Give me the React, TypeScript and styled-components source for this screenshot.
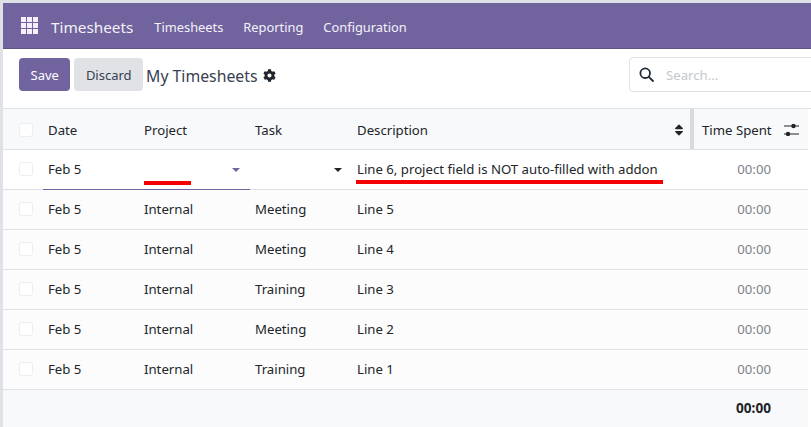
import React from "react";
import styled, { createGlobalStyle } from "styled-components";
import { FaCog, FaSort } from "react-icons/fa";

const GlobalStyle = createGlobalStyle`
  html, body {
    margin: 0;
    padding: 0;
    background: #ffffff;
    overflow: hidden;
  }
  * {
    box-sizing: border-box;
  }
`;

const Page = styled.div`
  width: 811px;
  height: 427px;
  overflow: hidden;
  display: flex;
  flex-direction: column;
  border-top: 3px solid #dee2e6;
  border-left: 3px solid #dee2e6;
  font-family: "Noto Sans", "Open Sans", sans-serif;
  font-size: 13.2px;
  color: #212529;
  background: #ffffff;
`;

const Navbar = styled.header`
  flex: 0 0 46px;
  display: flex;
  align-items: center;
  padding: 2px 0 0 18px;
  background: #71639e;
  border-bottom: 1px solid #5f5388;
  color: #f4f2f8;
`;

const AppsGrid = styled.div`
  display: grid;
  grid-template-columns: repeat(3, 5px);
  grid-auto-rows: 5px;
  gap: 1px;
  margin: -2px 13px 0 0;
`;

const AppsDot = styled.span`
  background: #f7f0fa;
`;

const Brand = styled.span`
  font-size: 15.3px;
  margin-right: 21px;
`;

const MenuItem = styled.span`
  font-size: 12.85px;
  margin-right: 20px;
`;

const ControlPanel = styled.div`
  flex: 0 0 60px;
  display: flex;
  align-items: center;
  padding: 0 0 8px 16px;
  border-bottom: 1px solid #dee2e6;
`;

const Button = styled.button<{ $primary?: boolean }>`
  height: 33px;
  padding: 0 11.5px;
  margin-right: 4px;
  border: 0;
  border-radius: 4px;
  font-family: inherit;
  font-size: 13px;
  color: ${(p) => (p.$primary ? "#ffffff" : "#374151")};
  background: ${(p) => (p.$primary ? "#71639e" : "#e0e2e6")};
`;

const Title = styled.span`
  display: flex;
  align-items: center;
  gap: 5px;
  margin-left: -1px;
  font-size: 15.8px;
  padding-top: 2px;
  color: #374151;
`;

const SearchBox = styled.div`
  display: flex;
  align-items: center;
  width: 190px;
  height: 35px;
  margin-left: auto;
  padding-left: 9px;
  flex-shrink: 0;
  margin-right: -8px;
  border: 1px solid #dee2e6;
  border-radius: 4px;
  color: #c4c8ce;
`;

const SearchIcon = styled.svg`
  width: 15px;
  height: 15px;
  margin-right: 12px;
  color: #1f2a37;
`;

const Table = styled.div`
  flex: 1;
  display: flex;
  flex-direction: column;
  width: 805px;
`;

const Row = styled.div<{ $head?: boolean; $edit?: boolean; $height: number }>`
  position: relative;
  flex: 0 0 ${(p) => p.$height}px;
  display: grid;
  grid-template-columns: 40px 96px 111px 102px 338px 4px 114px;
  align-items: center;
  padding: ${(p) => (p.$head ? "2px 0 0" : "0 0 2px")};
  border-bottom: 1px solid #dee2e6;
  background: ${(p) => (p.$head ? "#f8f9fa" : p.$edit ? "#ffffff" : "#fcfcfc")};
`;

const Footer = styled.div`
  flex: 1;
  display: flex;
  justify-content: flex-end;
  align-items: center;
  padding: 0 37px 2px 0;
  background: #f8f9fa;
  font-size: 13.6px;
  font-weight: 700;
`;

const CheckCell = styled.div`
  display: flex;
  padding-left: 16px;
`;

const CheckBox = styled.span`
  width: 14px;
  height: 14px;
  border: 1px solid #eceef1;
  border-radius: 3px;
  background: #ffffff;
`;

const Cell = styled.div`
  padding-left: 5px;
  white-space: nowrap;
  display: flex;
  align-items: center;
  justify-content: space-between;
`;

const DropdownCell = styled(Cell)`
  padding-right: 10px;
  height: 100%;
`;

const Caret = styled.span<{ $purple?: boolean }>`
  width: 0;
  height: 0;
  border-left: 4px solid transparent;
  border-right: 4px solid transparent;
  border-top: 4px solid ${(p) => (p.$purple ? "#71639e" : "#212529")};
  margin-top: 2px;
`;

const Handle = styled.div`
  height: calc(100% + 2px);
  margin-top: -2px;
  background: #d8dadd;
`;

const SortIcon = styled(FaSort)`
  font-size: 14px;
  margin-right: 4px;
`;

const HeadTime = styled.div`
  display: flex;
  align-items: center;
  padding-left: 8px;
`;

const AdjustIcon = styled.svg`
  width: 15px;
  height: 12px;
  margin-left: 12px;
`;

const TimeCell = styled.div`
  padding-right: 37px;
  text-align: right;
  color: #7c8289;
`;

const EditUnderline = styled.div`
  position: absolute;
  left: 40px;
  bottom: -1px;
  width: 207px;
  height: 1px;
  background: #71639e;
`;

const RedMark = styled.div<{ $left: number; $width: number; $top: number }>`
  position: absolute;
  left: ${(p) => p.$left}px;
  top: ${(p) => p.$top}px;
  width: ${(p) => p.$width}px;
  height: 4px;
  background: #f50000;
`;

const lines = [
  { project: "Internal", task: "Meeting", description: "Line 5" },
  { project: "Internal", task: "Meeting", description: "Line 4" },
  { project: "Internal", task: "Training", description: "Line 3" },
  { project: "Internal", task: "Meeting", description: "Line 2" },
  { project: "Internal", task: "Training", description: "Line 1" },
];

export default function App() {
  return (
    <>
      <GlobalStyle />
      <Page>
        <Navbar>
          <AppsGrid>
            {Array.from({ length: 9 }).map((_, i) => (
              <AppsDot key={i} />
            ))}
          </AppsGrid>
          <Brand>Timesheets</Brand>
          <MenuItem>Timesheets</MenuItem>
          <MenuItem>Reporting</MenuItem>
          <MenuItem>Configuration</MenuItem>
        </Navbar>
        <ControlPanel>
          <Button $primary>Save</Button>
          <Button>Discard</Button>
          <Title>
            My Timesheets
            <FaCog size={13} color="#212529" />
          </Title>
          <SearchBox>
            <SearchIcon viewBox="0 0 15 15" fill="none" stroke="currentColor" strokeWidth="1.8">
              <circle cx="6.2" cy="6.2" r="4.8" />
              <path d="M9.8 9.8 L14 14" strokeLinecap="round" />
            </SearchIcon>
            Search...
          </SearchBox>
        </ControlPanel>
        <Table>
          <Row $head $height={41}>
            <CheckCell>
              <CheckBox />
            </CheckCell>
            <Cell>Date</Cell>
            <Cell>Project</Cell>
            <Cell>Task</Cell>
            <Cell>
              Description
              <SortIcon />
            </Cell>
            <Handle />
            <HeadTime>
              Time Spent
              <AdjustIcon viewBox="0 0 15 12" fill="#212529">
                <rect x="0" y="1.5" width="15" height="1" />
                <rect x="0" y="9.5" width="15" height="1" />
                <circle cx="9.5" cy="2" r="2.2" />
                <circle cx="4" cy="10" r="2.2" />
              </AdjustIcon>
            </HeadTime>
          </Row>
          <Row $edit $height={40}>
            <CheckCell>
              <CheckBox />
            </CheckCell>
            <Cell>Feb 5</Cell>
            <DropdownCell>
              <span />
              <Caret $purple />
            </DropdownCell>
            <DropdownCell>
              <span />
              <Caret />
            </DropdownCell>
            <Cell>Line 6, project field is NOT auto-filled with addon</Cell>
            <span />
            <TimeCell>00:00</TimeCell>
            <EditUnderline />
            <RedMark $left={141} $width={47} $top={31} />
            <RedMark $left={353} $width={307} $top={30} />
          </Row>
          {lines.map((line) => (
            <Row key={line.description} $height={40}>
              <CheckCell>
                <CheckBox />
              </CheckCell>
              <Cell>Feb 5</Cell>
              <Cell>{line.project}</Cell>
              <Cell>{line.task}</Cell>
              <Cell>{line.description}</Cell>
              <span />
              <TimeCell>00:00</TimeCell>
            </Row>
          ))}
          <Footer>00:00</Footer>
        </Table>
      </Page>
    </>
  );
}
